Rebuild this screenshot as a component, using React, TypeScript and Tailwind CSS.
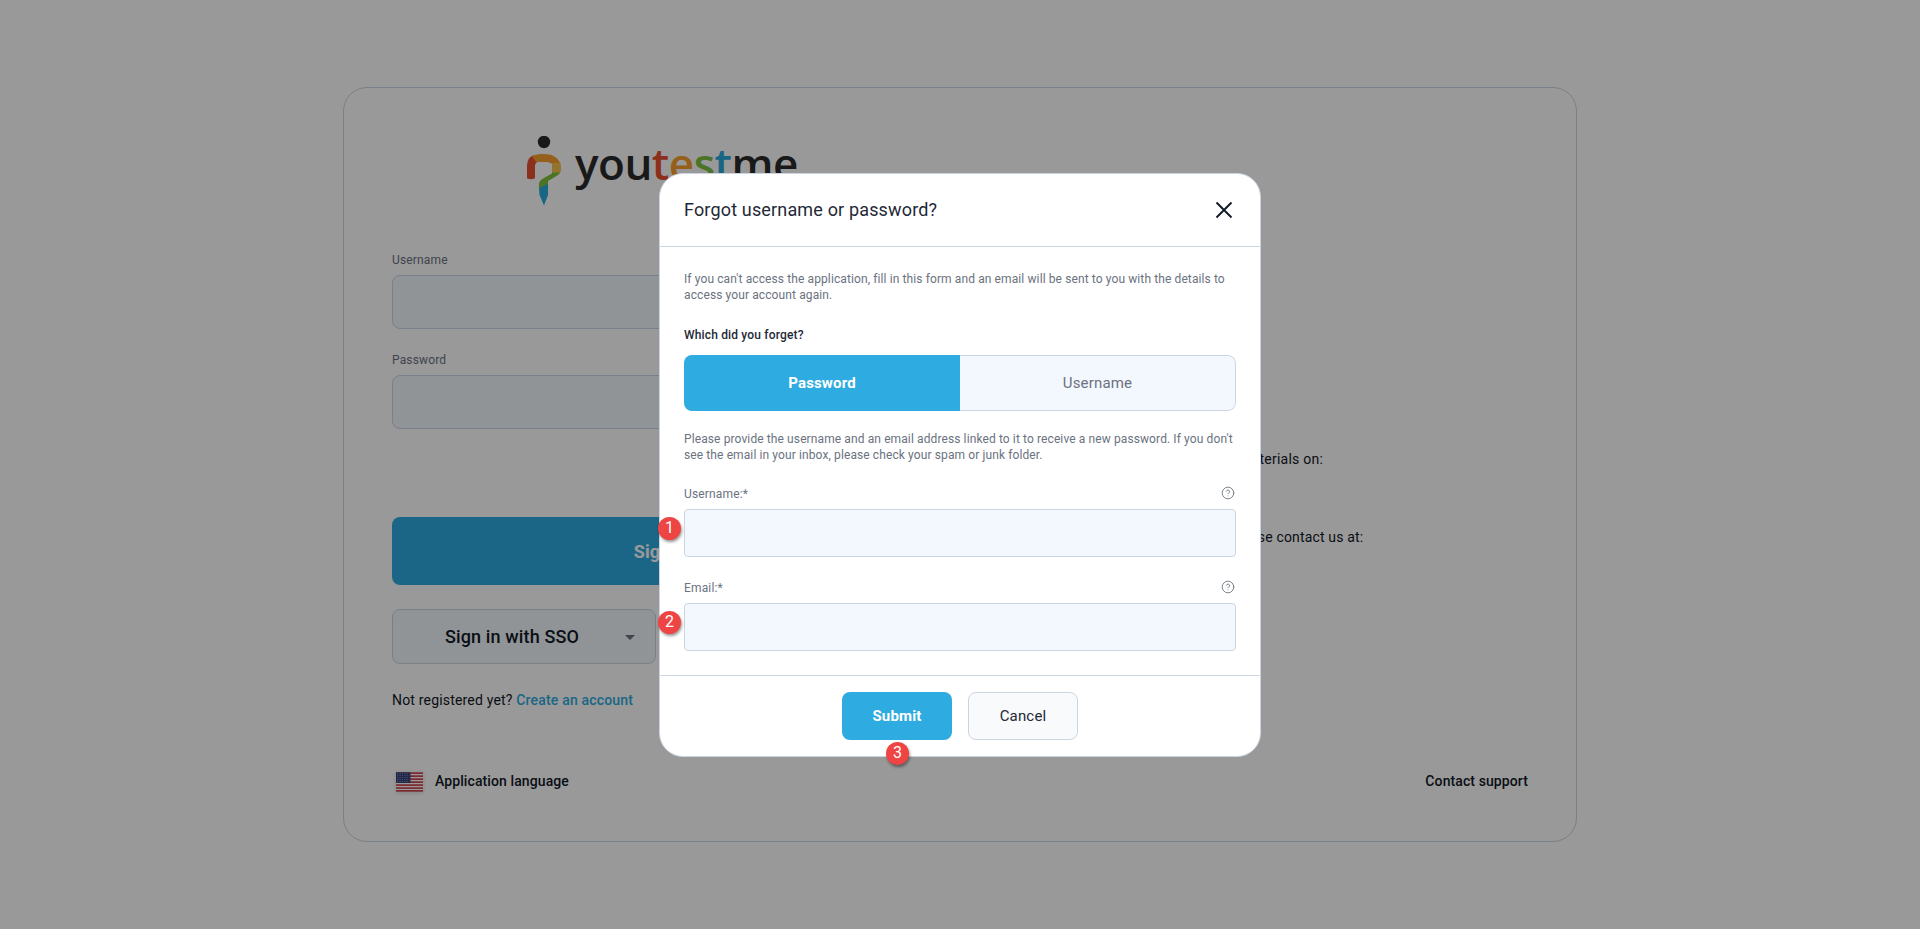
import { CircleHelp } from 'lucide-react';

function Logo() {
  return (
    <div className="flex h-[70px] ml-[133px] items-start">
      <svg width="42" height="70" viewBox="0 0 42 70" className="shrink-0">
        <circle cx="19" cy="6" r="6.2" fill="#2a2a2c" />
        <path d="M2 42 L2 31 C2 25 4 21 8 19.5 L12 26.5 C10.5 27 10 28.5 10 31 L10 42 C10 43.5 2 43.5 2 42 Z" fill="#e8502f" />
        <path d="M7 20 C10 18.5 14 18 19 18 C27 18 33 21 35.5 28 L27 28 C26 26.5 23 26 19 26 L11 26 Z" fill="#f7a02e" />
        <path d="M27 27 L35.5 27 C36 29 36 31 36 33 C36 35 35.5 36.5 34 38 L27 38 Z" fill="#f2c14e" />
        <path d="M35 36.5 C34 38.5 32 40 29 41.5 L23 45 L23 49 L14 53 L14 48 C14 45.5 15.5 44 18 42.5 L27 37.5 L27 36.5 Z" fill="#7fc241" />
        <path d="M14 52 L23 48 L23 59 L19 69.5 L14.5 59 Z" fill="#2aa8dc" />
      </svg>
      <div className="-mt-[3px] ml-[8px] font-['Open_Sans',sans-serif] text-[44px] leading-[60px] font-semibold tracking-[-0.5px] text-[#2a2a2c] whitespace-nowrap">
        you<span className="text-[#e8502f]">t</span><span className="text-[#f7a02e]">e</span><span className="text-[#7fc241]">s</span><span className="text-[#2aa8dc]">t</span>me
      </div>
    </div>
  );
}

function UsFlag() {
  return (
    <svg width="27" height="20" viewBox="0 0 28 20" className="shrink-0 drop-shadow-sm">
      <rect width="28" height="20" fill="#fff" />
      <rect y="0" width="28" height="1.6" fill="#c8313e" />
      <rect y="3.1" width="28" height="1.6" fill="#c8313e" />
      <rect y="6.2" width="28" height="1.6" fill="#c8313e" />
      <rect y="9.3" width="28" height="1.6" fill="#c8313e" />
      <rect y="12.4" width="28" height="1.6" fill="#c8313e" />
      <rect y="15.5" width="28" height="1.6" fill="#c8313e" />
      <rect y="18.4" width="28" height="1.6" fill="#c8313e" />
      <rect width="15" height="10.9" fill="#2b3a75" />
      <path d="M1 1.5h13M1 3.5h13M1 5.5h13M1 7.5h13M1 9.5h13" stroke="#dfe3f2" strokeWidth="0.7" strokeDasharray="0.8 1" />
    </svg>
  );
}

function Badge({ n, className }: { n: number; className: string }) {
  return (
    <div className={`absolute flex h-[23px] w-[23px] items-center justify-center rounded-full bg-[#ef4444] text-[16px] font-normal leading-none text-white shadow-[1px_2px_3px_rgba(0,0,0,0.4)] ${className}`}>
      {n}
    </div>
  );
}

function Field({ label, n }: { label: string; n: number }) {
  return (
    <div>
      <div className="flex h-4 items-center justify-between text-[12px] leading-4 text-[#6b7280]">
        <span>{label}</span>
        <CircleHelp size={14} strokeWidth={1.5} className="mr-px -mt-[2px]" />
      </div>
      <div className="relative mt-[7px] h-[48px] rounded-[4px] border border-[#cbd5e1] bg-[#f3f7fe]">
        <Badge n={n} className="left-[-27px] top-[7px]" />
      </div>
    </div>
  );
}

export default function App() {
  return (
    <div className="relative flex h-screen items-center justify-center overflow-hidden bg-white font-['Roboto',sans-serif] tracking-[0.01em] text-[#111827]">
      <div className="flex h-[755px] w-[1234px] flex-col rounded-3xl border border-[#cbd5e1] px-[48px] pt-[48px]">
        <div className="flex">
          <div className="w-[540px] shrink-0">
            <Logo />
            <div className="mt-[46px] text-[12px] leading-4 text-[#6b7280]">Username</div>
            <div className="mt-[7px] h-[54px] rounded-lg border border-[#cbd5e1] bg-[#f1f7fb]" />
            <div className="mt-[23px] text-[12px] leading-4 text-[#6b7280]">Password</div>
            <div className="mt-[7px] h-[54px] rounded-lg border border-[#cbd5e1] bg-[#f1f7fb]" />
            <button className="mt-[88px] flex h-[68px] w-full items-center justify-center rounded-lg bg-[#2eabe0] text-[18px] font-bold text-white">
              Sign in
            </button>
            <button className="relative mt-[24px] flex h-[55px] w-[264px] items-center justify-center rounded-lg border border-[#cbd5e1] bg-[#f1f7fb] pr-[24px] text-[18px] font-medium tracking-[0.008em]">
              Sign in with SSO
              <span className="absolute right-[20px] top-[25px] h-0 w-0 border-x-[5px] border-t-[5px] border-x-transparent border-t-[#6b7280]" />
            </button>
            <div className="mt-[26px] text-[14px] leading-5 tracking-[0.013em]">
              Not registered yet? <span className="font-medium text-[#2eabe0]">Create an account</span>
            </div>
          </div>
          <div className="ml-[131px] text-[14px] leading-5 whitespace-nowrap">
            <div className="mt-[313px] tracking-[0.018em]">Find our guide and training materials on:</div>
            <div className="mt-[58px]">If you have any questions, please contact us at:</div>
          </div>
        </div>
        <div className="mt-[61px] flex items-center justify-between">
          <div className="ml-[4px] flex items-center gap-[12px] text-[14px] font-medium tracking-[0.007em]">
            <UsFlag />
            <span>Application language</span>
          </div>
          <span className="text-[14px] font-medium tracking-[0.007em]">Contact support</span>
        </div>
      </div>

      <div className="absolute inset-0 flex items-center justify-center bg-black/40">
        <div className="relative h-[584px] w-[602px] rounded-3xl border border-[#cbd5e1] bg-white">
          <div className="flex h-[73px] items-center justify-between border-b border-[#cbd5e1] px-[24px]">
            <h2 className="text-[18px] leading-6 text-[#1f2937]">Forgot username or password?</h2>
            <svg width="18" height="18" viewBox="0 0 18 18" className="mr-[3px]">
              <path d="M1.5 1.5 L16.5 16.5 M16.5 1.5 L1.5 16.5" stroke="#111827" strokeWidth="1.9" fill="none" />
            </svg>
          </div>
          <div className="h-[428px] px-[24px] pt-[24px]">
            <p className="text-[12px] leading-4 tracking-[0.009em] text-[#6b7280]">
              If you can't access the application, fill in this form and an email will be sent to you with the details to access your account again.
            </p>
            <div className="mt-[24px] text-[12px] leading-4 font-medium text-[#1f2937]">Which did you forget?</div>
            <div className="mt-[12px] flex h-[56px] overflow-hidden rounded-lg text-[15px]">
              <div className="flex w-1/2 items-center justify-center bg-[#2eabe0] pt-px font-bold text-white">Password</div>
              <div className="flex w-1/2 items-center justify-center rounded-r-lg border border-l-0 border-[#cbd5e1] bg-[#f3f7fe] pt-px text-[#6b7280]">Username</div>
            </div>
            <p className="mt-[20px] text-[12px] leading-4 tracking-[0.009em] text-[#6b7280]">
              Please provide the username and an email address linked to it to receive a new password. If you don't see the email in your inbox, please check your spam or junk folder.
            </p>
            <div className="mt-[23px]"><Field label="Username:*" n={1} /></div>
            <div className="mt-[23px]"><Field label="Email:*" n={2} /></div>
          </div>
          <div className="relative flex h-[81px] justify-center gap-[16px] border-t border-[#cbd5e1] pt-[16px] text-[15px]">
            <button className="relative h-[48px] w-[110px] rounded-lg bg-[#2eabe0] pt-px font-bold text-white">
              Submit
              <Badge n={3} className="left-[44px] top-[50px]" />
            </button>
            <button className="h-[48px] w-[110px] rounded-lg border border-[#cbd5e1] bg-[#f8fafc] pt-px text-[#1f2937]">Cancel</button>
          </div>
        </div>
      </div>
    </div>
  );
}
